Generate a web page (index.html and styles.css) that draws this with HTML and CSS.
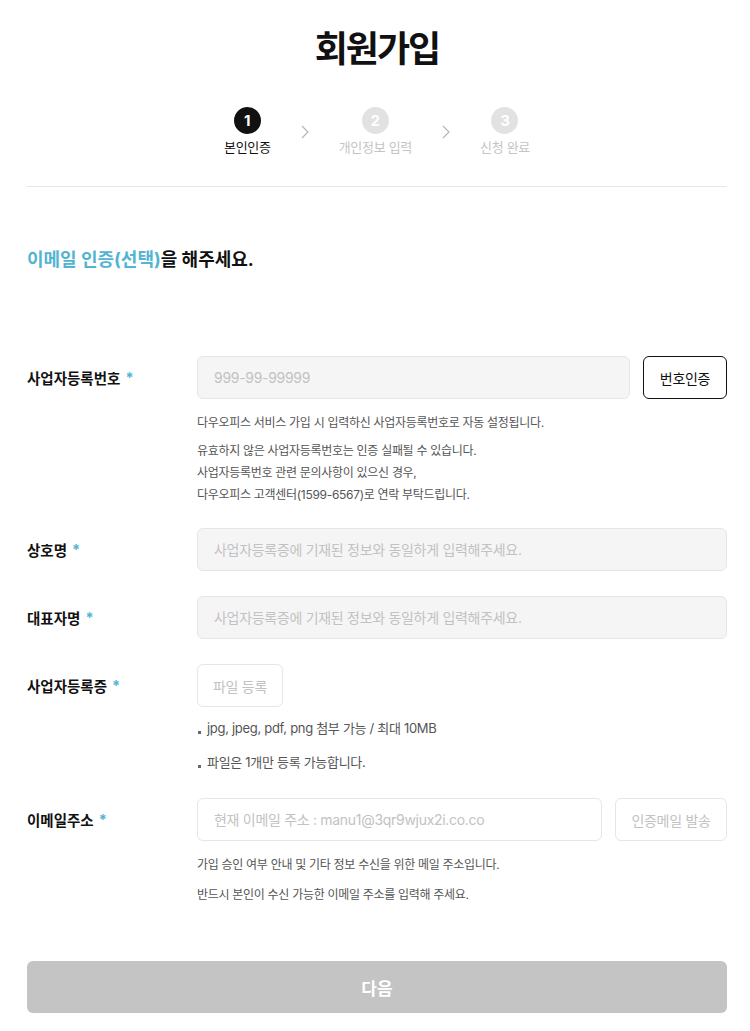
FILE: index.html
```html
<!DOCTYPE html>
<html lang="ko">

<head>
    <meta charset="UTF-8">
    <title>회원가입</title>
    <link rel="stylesheet" href="styles.css">
</head>

<body>
    <div id="wrap">
        <h1 class="page-title">회원가입</h1>

        <div class="steps">
            <div class="step active">
                <span class="step-num">1</span>
                <span class="step-label">본인인증</span>
            </div>
            <svg class="step-arrow" width="8" height="14" viewBox="0 0 8 14">
                <path d="M1 1l6 6-6 6" fill="none" stroke="#b5b5b5" stroke-width="1.2" />
            </svg>
            <div class="step">
                <span class="step-num">2</span>
                <span class="step-label">개인정보 입력</span>
            </div>
            <svg class="step-arrow" width="8" height="14" viewBox="0 0 8 14">
                <path d="M1 1l6 6-6 6" fill="none" stroke="#b5b5b5" stroke-width="1.2" />
            </svg>
            <div class="step">
                <span class="step-num">3</span>
                <span class="step-label">신청 완료</span>
            </div>
        </div>

        <h3 class="section-title"><span class="point">이메일 인증(선택)</span>을 해주세요.</h3>

        <form id="joinForm">
            <div class="form-row">
                <label class="form-label" for="bizNo">사업자등록번호 <i>*</i></label>
                <div class="form-field">
                    <div class="input-line">
                        <input type="text" id="bizNo" class="input gray" placeholder="999-99-99999">
                        <button type="button" class="btn-line dark">번호인증</button>
                    </div>
                    <p class="help first">다우오피스 서비스 가입 시 입력하신 사업자등록번호로 자동 설정됩니다.</p>
                    <p class="help">유효하지 않은 사업자등록번호는 인증 실패될 수 있습니다.<br>
                        사업자등록번호 관련 문의사항이 있으신 경우,<br>
                        다우오피스 고객센터(1599-6567)로 연락 부탁드립니다.</p>
                </div>
            </div>

            <div class="form-row">
                <label class="form-label" for="company">상호명 <i>*</i></label>
                <div class="form-field">
                    <input type="text" id="company" class="input gray" placeholder="사업자등록증에 기재된 정보와 동일하게 입력해주세요.">
                </div>
            </div>

            <div class="form-row">
                <label class="form-label" for="ceo">대표자명 <i>*</i></label>
                <div class="form-field">
                    <input type="text" id="ceo" class="input gray" placeholder="사업자등록증에 기재된 정보와 동일하게 입력해주세요.">
                </div>
            </div>

            <div class="form-row">
                <label class="form-label">사업자등록증 <i>*</i></label>
                <div class="form-field">
                    <button type="button" class="btn-line light file-btn">파일 등록</button>
                    <ul class="bullets">
                        <li>jpg, jpeg, pdf, png 첨부 가능 / 최대 10MB</li>
                        <li>파일은 1개만 등록 가능합니다.</li>
                    </ul>
                </div>
            </div>

            <div class="form-row">
                <label class="form-label" for="email">이메일주소 <i>*</i></label>
                <div class="form-field">
                    <div class="input-line">
                        <input type="text" id="email" class="input" placeholder="현재 이메일 주소 : manu1@3qr9wjux2i.co.co">
                        <button type="button" class="btn-line light mail-btn">인증메일 발송</button>
                    </div>
                    <p class="help first">가입 승인 여부 안내 및 기타 정보 수신을 위한 메일 주소입니다.</p>
                    <p class="help wide">반드시 본인이 수신 가능한 이메일 주소를 입력해 주세요.</p>
                </div>
            </div>

            <button type="button" class="btn-next" disabled>다음</button>
        </form>
    </div>
</body>

</html>
```

FILE: styles.css
```css
* {
    margin: 0;
    padding: 0;
    box-sizing: border-box;
    font-family: 'Inter', 'Noto Sans CJK KR', sans-serif;
}

body {
    background: #fff;
    color: #111;
}

#wrap {
    padding: 0 23px 19px 27px;
}

.page-title {
    margin-top: 26px;
    font-size: 36px;
    line-height: 47px;
    font-weight: 700;
    text-align: center;
    letter-spacing: -2px;
}

.steps {
    display: flex;
    justify-content: center;
    align-items: center;
    gap: 30px;
    margin-top: 34px;
    padding-bottom: 30px;
    border-bottom: 1px solid #e6e6e6;
}

.step {
    display: flex;
    flex-direction: column;
    align-items: center;
    gap: 4px;
}

.step-num {
    width: 27px;
    height: 27px;
    border-radius: 50%;
    background: #e2e2e2;
    color: #fff;
    font-size: 15px;
    font-weight: 700;
    line-height: 27px;
    text-align: center;
}

.step-label {
    font-size: 13px;
    line-height: 18px;
    color: #c4c4c4;
    letter-spacing: -0.3px;
}

.step.active .step-num {
    background: #111;
}

.step.active .step-label {
    color: #111;
}

.section-title {
    margin-top: 60px;
    margin-bottom: 83px;
    font-size: 18px;
    line-height: 26px;
    font-weight: 700;
    letter-spacing: 0;
}

.point {
    color: #52b4d2;
}

.form-row {
    display: flex;
    margin-bottom: 25px;
}

.form-row:first-child {
    margin-bottom: 22px;
}

.form-label {
    width: 170px;
    flex-shrink: 0;
    height: 43px;
    display: flex;
    align-items: center;
    font-size: 14.5px;
    font-weight: 700;
}

.form-label i {
    font-style: normal;
    color: #52b4d2;
    margin-left: 5px;
}

.form-field {
    flex: 1;
}

.input-line {
    display: flex;
    gap: 13px;
}

.input {
    flex: 1;
    width: 100%;
    height: 43px;
    padding: 0 16px;
    border: 1px solid #e6e6e6;
    border-radius: 6px;
    background: #fff;
    font-size: 14px;
    color: #111;
    outline: none;
}

.input.gray {
    background: #f5f5f5;
}

.input::placeholder {
    color: #c2c2c2;
    letter-spacing: -0.3px;
}

.btn-line {
    height: 43px;
    padding: 0 15px;
    border-radius: 6px;
    background: #fff;
    font-size: 14px;
    cursor: pointer;
    letter-spacing: -0.3px;
}

.btn-line.dark {
    width: 84px;
    padding: 0;
    border: 1px solid #111;
    color: #111;
}

.btn-line.light {
    border: 1px solid #e6e6e6;
    color: #c2c2c2;
}

.mail-btn {
    width: 112px;
    padding: 0;
}

.file-btn {
    width: 86px;
    padding: 0;
}

.help {
    margin-top: 6px;
    font-size: 12px;
    line-height: 22px;
    color: #555;
    letter-spacing: -0.3px;
}

.help.first {
    margin-top: 13px;
}

.help.wide {
    margin-top: 8px;
}

.bullets {
    list-style: none;
    margin-top: 10px;
}

.bullets li {
    position: relative;
    padding-left: 10px;
    font-size: 13px;
    line-height: 22px;
    color: #555;
    letter-spacing: -0.3px;
}

.bullets li + li {
    margin-top: 12px;
}

.bullets li::before {
    content: '';
    position: absolute;
    left: 1px;
    top: 14px;
    width: 3px;
    height: 3px;
    background: #666;
}

.btn-next {
    display: block;
    width: 100%;
    height: 52px;
    margin-top: 55px;
    border: none;
    border-radius: 6px;
    background: #c4c4c4;
    color: #fff;
    font-size: 17px;
    font-weight: 700;
}
```
